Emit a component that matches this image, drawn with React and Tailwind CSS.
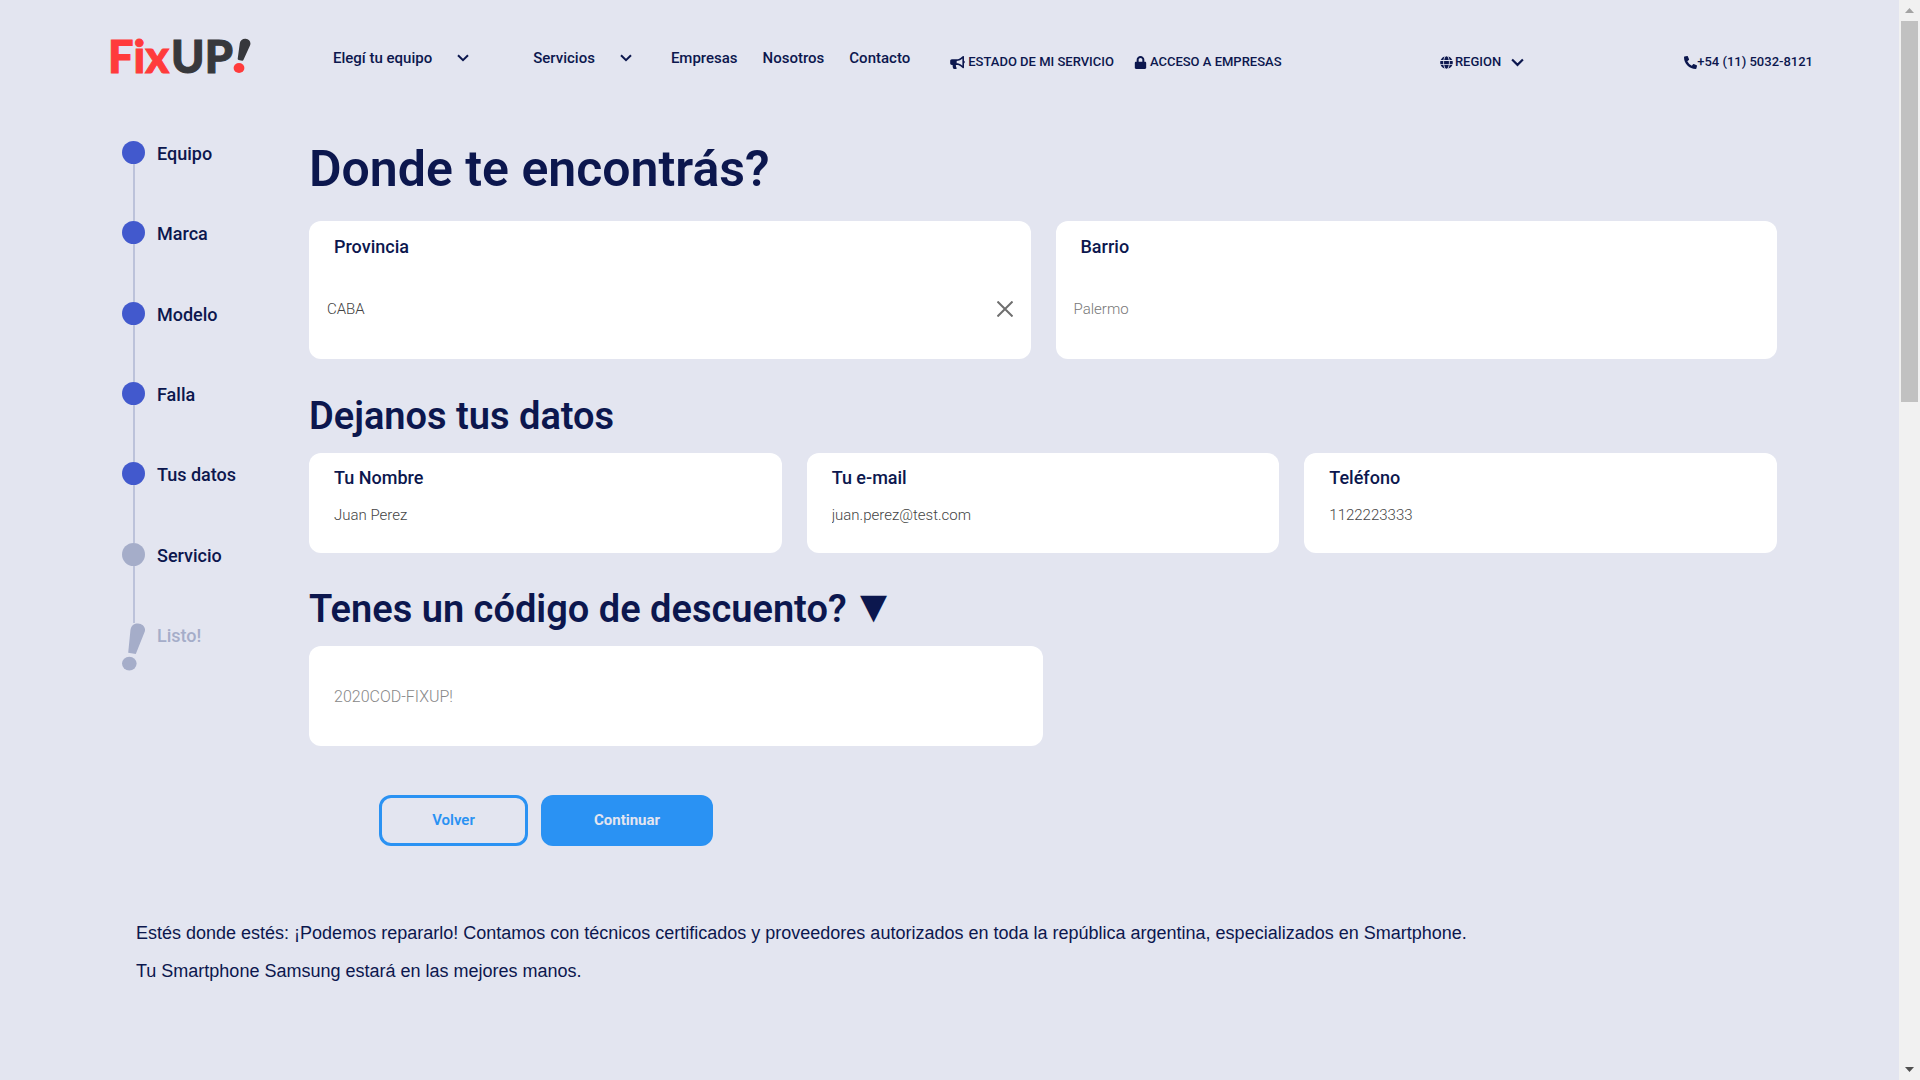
import { FaBullhorn, FaLock, FaGlobe, FaPhoneAlt } from "react-icons/fa";

function Chevron({ className }) {
  return (
    <svg viewBox="0 0 12 8" className={className} fill="none" stroke="currentColor" strokeWidth="2" aria-hidden="true">
      <path d="M1 1.2 L6 6.2 L11 1.2" />
    </svg>
  );
}

function Logo() {
  return (
    <a href="#inicio" aria-label="FixUP!" className="flex w-[143px] shrink-0 items-center font-['Lato',sans-serif] text-[45px] leading-[48px] font-black text-[#37383c] [-webkit-text-stroke:1px_currentColor]">
      <span className="text-[#ff3b3b]">Fix</span>
      <span className="ml-0.5">UP</span>
      <svg viewBox="0 0 18 36" className="h-9 w-[18px] shrink-0" aria-hidden="true">
        <path d="M6.8 5.2 C7.4 2.2 9.6 0.6 12.6 0.8 C16.4 1.1 18.4 4.2 17 7.6 L10.4 22 Q10 22.8 9.2 22.7 L5.6 21.9 Q4.6 21.7 4.7 20.8 Z" fill="#37383c" />
        <ellipse cx="6" cy="30" rx="5.4" ry="4.9" fill="#ff3b3b" />
      </svg>
    </a>
  );
}

const steps = [
  { name: "Equipo", done: true },
  { name: "Marca", done: true },
  { name: "Modelo", done: true },
  { name: "Falla", done: true },
  { name: "Tus datos", done: true },
  { name: "Servicio", done: false },
];

function Steps() {
  return (
    <ol className="flex h-[538px] w-[187px] shrink-0 flex-col pt-2 text-lg leading-6 font-medium">
      {steps.map((s) => (
        <li key={s.name} className="flex flex-1 gap-3">
          <div className="flex w-[23px] flex-col items-center">
            <span className={s.done ? "size-[23px] shrink-0 rounded-full bg-[#4259cd]" : "size-[23px] shrink-0 rounded-full bg-[#a5adc9]"} />
            <span className="w-0.5 flex-1 bg-[#bcc2da]" />
          </div>
          <span className="pt-px">{s.name}</span>
        </li>
      ))}
      <li className="flex gap-3 text-[#a5adc9]">
        <svg viewBox="0 0 23 48" className="h-12 w-[23px]" fill="currentColor" aria-hidden="true">
          <path d="M8.4 7.5 C9 2.5 11.8 0.2 16 0.4 C21.4 0.8 24.4 5 22.4 9.6 L13.8 31 L6.2 29.8 Z" />
          <ellipse cx="7.3" cy="40.6" rx="7.3" ry="6.9" />
        </svg>
        <span className="pt-px">Listo!</span>
      </li>
    </ol>
  );
}

const inputClass = "w-full bg-transparent text-[15px] leading-6 font-light text-[#444] outline-none placeholder:text-[#777]";

function Field({ id, label, value, type }) {
  return (
    <div className="h-[100px] rounded-xl bg-white px-[25px] pt-[13px]">
      <label htmlFor={id} className="block text-lg leading-6 font-medium">{label}</label>
      <input id={id} type={type} defaultValue={value} className={inputClass + " mt-[13px]"} />
    </div>
  );
}

function Header() {
  return (
    <header className="flex h-[115px] items-start pt-8 pl-[108px] pr-[86px] font-medium">
      <Logo />
      <nav className="ml-[82px] flex pt-[14px] text-[15px] leading-6" aria-label="Principal">
        <button type="button" className="flex items-center gap-[25px] font-medium">
          Elegí tu equipo <Chevron className="h-2 w-3" />
        </button>
        <button type="button" className="ml-16 flex items-center gap-[25px] font-medium">
          Servicios <Chevron className="h-2 w-3" />
        </button>
        <div className="ml-[39px] flex gap-[25px]">
          <a href="#empresas">Empresas</a>
          <a href="#nosotros">Nosotros</a>
          <a href="#contacto">Contacto</a>
        </div>
      </nav>
      <div className="ml-10 flex flex-1 pt-[18px] text-[13px] leading-6">
        <a href="#estado" className="flex items-center gap-[3px]">
          <FaBullhorn className="h-[13px] w-[15px]" /> ESTADO DE MI SERVICIO
        </a>
        <a href="#acceso" className="ml-5 flex items-center gap-[3px]">
          <FaLock className="size-[13px]" /> ACCESO A EMPRESAS
        </a>
        <button type="button" className="ml-auto flex items-center font-medium">
          <FaGlobe className="mr-0.5 size-[13px]" /> REGION <Chevron className="ml-[10px] h-[9px] w-[13px]" />
        </button>
        <a href="tel:+541150328121" className="ml-[160px] flex items-center">
          <FaPhoneAlt className="size-[13px]" />
          +54 (11) 5032-8121
        </a>
      </div>
    </header>
  );
}

function Scrollbar() {
  return (
    <div className="flex w-[21px] shrink-0 flex-col items-center justify-between bg-[#f1f1f1]" aria-hidden="true">
      <div className="flex w-full flex-col items-center">
        <div className="flex h-[21px] items-center">
          <svg viewBox="0 0 9 5" className="h-[5px] w-[9px]"><path d="M0 5 L4.5 0 L9 5Z" fill="#a3a3a3" /></svg>
        </div>
        <div className="h-[381px] w-[17px] bg-[#c1c1c1]" />
      </div>
      <div className="flex h-[21px] items-center">
        <svg viewBox="0 0 9 5" className="h-[5px] w-[9px]"><path d="M0 0 L4.5 5 L9 0Z" fill="#505050" /></svg>
      </div>
    </div>
  );
}

export default function App() {
  return (
    <div className="flex min-h-screen bg-[#e3e5f0] font-['Roboto',sans-serif] text-[#0c174e]">
      <div className="min-w-0 flex-1">
        <Header />
        <div className="flex pl-[122px] pr-[122px] pt-[18px]">
          <Steps />
          <main className="min-w-0 flex-1">
            <h1 className="pt-px text-[50px] leading-[70px] font-semibold">Donde te encontrás?</h1>
            <div className="mt-[17px] grid grid-cols-2 gap-[25px]">
              <div className="h-[138px] rounded-xl bg-white px-[18px] pt-[14px]">
                <label htmlFor="provincia" className="ml-[7px] block text-lg leading-6 font-medium">Provincia</label>
                <div className="mt-[38px] flex items-center">
                  <input id="provincia" defaultValue="CABA" className={inputClass} />
                  <button type="button" aria-label="Borrar provincia" className="text-[#6f6f6f]">
                    <svg viewBox="0 0 16 16" className="size-4" stroke="currentColor" strokeWidth="2" aria-hidden="true">
                      <path d="M0.5 0.5 L15.5 15.5 M15.5 0.5 L0.5 15.5" />
                    </svg>
                  </button>
                </div>
              </div>
              <div className="h-[138px] rounded-xl bg-white px-[18px] pt-[14px]">
                <label htmlFor="barrio" className="ml-[7px] block text-lg leading-6 font-medium">Barrio</label>
                <input id="barrio" placeholder="Palermo" className={inputClass + " mt-[38px]"} />
              </div>
            </div>

            <h2 className="mt-8 text-[38px] leading-[50px] font-semibold">Dejanos tus datos</h2>
            <div className="mt-3 grid grid-cols-3 gap-[25px]">
              <Field id="nombre" type="text" label="Tu Nombre" value="Juan Perez" />
              <Field id="email" type="email" label="Tu e-mail" value="juan.perez@test.com" />
              <Field id="telefono" type="tel" label="Teléfono" value="1122223333" />
            </div>

            <h2 className="mt-[31px] text-[38px] leading-[50px] font-semibold">
              <label htmlFor="codigo" className="flex h-[50px] items-center gap-1">
                Tenes un código de descuento? <span className="pb-1.5 text-[46px]">▼</span>
              </label>
            </h2>
            <div className="mt-3 flex h-[100px] w-1/2 items-center rounded-xl bg-white px-[25px] pt-0.5">
              <input id="codigo" placeholder="2020COD-FIXUP!" className="w-full bg-transparent text-base leading-6 font-light outline-none placeholder:text-[#888]" />
            </div>

            <div className="mt-[49px] flex gap-[13px] pl-[70px] text-[15px]">
              <button type="button" className="h-[51px] w-[149px] rounded-xl border-3 border-[#2a92f3] font-semibold text-[#2a92f3]">Volver</button>
              <button type="submit" className="h-[51px] w-[172px] rounded-xl bg-[#2a92f3] font-bold text-[#e3e5f0]">Continuar</button>
            </div>
          </main>
        </div>
        <div className="px-[136px] pt-[68px] font-['Liberation_Sans',sans-serif] text-lg leading-[38px]">
          <p>Estés donde estés: ¡Podemos repararlo! Contamos con técnicos certificados y proveedores autorizados en toda la república argentina, especializados en Smartphone.</p>
          <p>Tu Smartphone Samsung estará en las mejores manos.</p>
        </div>
      </div>
      <Scrollbar />
    </div>
  );
}
